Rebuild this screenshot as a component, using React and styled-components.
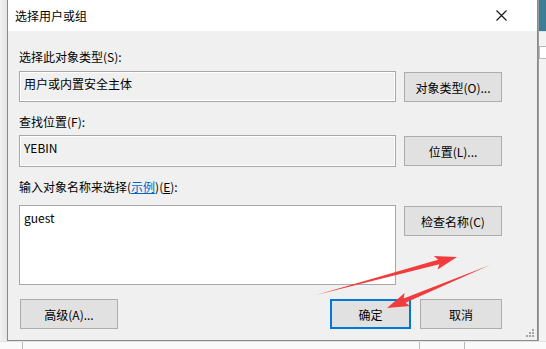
import React from 'react'
import styled, { createGlobalStyle } from 'styled-components'

const GlobalStyle = createGlobalStyle`
  html, body {
    margin: 0;
    padding: 0;
    background: #f4f4f4;
    overflow: hidden;
  }
  body {
    font-family: "Noto Sans CJK SC", "Liberation Sans", sans-serif;
  }
`

const Screen = styled.div`
  position: relative;
  width: 546px;
  height: 349px;
  display: grid;
  grid-template-columns: 7px 531px 8px;
  grid-template-rows: 341px 8px;
  overflow: hidden;
`

const LeftStrip = styled.div`
  background: linear-gradient(90deg, #f2f2f2 0%, #e4e4e4 100%);
`

const RightStrip = styled.div`
  display: flex;
  flex-direction: column;
  background: #f3f3f3;
  border-left: 1px solid #9a9a9a;
`

const RightTop = styled.div`
  height: 31px;
  background: #3d7d96;
  border-bottom: 1px solid #d8e6ec;
`

const RightBox = styled.div`
  margin-top: 14px;
  height: 11px;
  border: 1px solid #b8b8b8;
  border-right: none;
  background: #fff;
`

const BottomStrip = styled.div`
  grid-column: 1 / span 3;
  display: flex;
  background: #fafafa;
  border-top: 1px solid #e2e2e2;
`

const BottomCell = styled.div`
  width: ${p => p.$w}px;
  border-right: 1px solid #b9b9b9;
  flex-shrink: 0;
`

const Dialog = styled.div`
  position: relative;
  display: flex;
  flex-direction: column;
  background: #f0f0f0;
  border-left: 1px solid #8a8a8a;
  border-right: 1px solid #8a8a8a;
  border-bottom: 1px solid #8a8a8a;
  box-sizing: border-box;
`

const TitleBar = styled.div`
  height: 31px;
  background: #fff;
  display: flex;
  align-items: center;
  justify-content: space-between;
  padding-left: 7px;
  flex-shrink: 0;
`

const Title = styled.span`
  font-size: 12px;
  color: #000;
  line-height: 14px;
`

const CloseBtn = styled.div`
  width: 46px;
  height: 31px;
  margin-right: 13px;
  display: flex;
  align-items: center;
  justify-content: center;
`

const Body = styled.div`
  padding: 19px 35px 0 11px;
  display: flex;
  flex-direction: column;
`

const Label = styled.div`
  font-size: 12px;
  line-height: 14px;
  color: #000;
  margin-top: ${p => p.$top || 0}px;
  margin-bottom: ${p => p.$bottom || 0}px;
`

const Link = styled.span`
  color: #0066cc;
  text-decoration: underline;
`

const Key = styled.span`
  text-decoration: underline;
`

const Row = styled.div`
  display: grid;
  grid-template-columns: 377px 98px;
  column-gap: 8px;
  align-items: start;
`

const Field = styled.div`
  height: ${p => p.$h}px;
  box-sizing: border-box;
  border: 1px solid #a8a8a8;
  box-shadow: inset 0 0 0 1px #ffffff;
  background: ${p => (p.$white ? '#ffffff' : '#f0f0f0')};
  padding: 5px 3px 0 4px;
  font-size: 12px;
  line-height: 14px;
  color: #000;
`

const Button = styled.div`
  height: 30px;
  margin-top: ${p => p.$top || 0}px;
  width: ${p => (p.$w ? `${p.$w}px` : 'auto')};
  box-sizing: border-box;
  border: ${p => (p.$primary ? '2px solid #0078d7' : '1px solid #adadad')};
  background: #e1e1e1;
  display: flex;
  align-items: center;
  justify-content: center;
  font-size: 12px;
  color: #000;
`

const Footer = styled.div`
  margin-top: 14px;
  display: flex;
  justify-content: space-between;
  padding-left: 1px;
`

const FooterGroup = styled.div`
  display: flex;
  gap: 9px;
`

const Grip = styled.svg`
  position: absolute;
  right: 2px;
  bottom: 2px;
`

const Arrows = styled.svg`
  position: absolute;
  left: 0;
  top: 0;
  pointer-events: none;
`

function arrowPath(tail, tip, headLen, headHalf, shaftHalf) {
  const dx = tip[0] - tail[0]
  const dy = tip[1] - tail[1]
  const len = Math.hypot(dx, dy)
  const ux = dx / len
  const uy = dy / len
  const nx = -uy
  const ny = ux
  const bx = tip[0] - ux * headLen
  const by = tip[1] - uy * headLen
  const pts = [
    tail,
    [bx + nx * shaftHalf, by + ny * shaftHalf],
    [bx - ux * 3 + nx * headHalf, by - uy * 3 + ny * headHalf],
    tip,
    [bx - ux * 3 - nx * headHalf, by - uy * 3 - ny * headHalf],
    [bx - nx * shaftHalf, by - ny * shaftHalf],
  ]
  return pts.map(p => `${p[0].toFixed(1)},${p[1].toFixed(1)}`).join(' ')
}

export default function App() {
  return (
    <>
      <GlobalStyle />
      <Screen>
        <LeftStrip />
        <Dialog>
          <TitleBar>
            <Title>选择用户或组</Title>
            <CloseBtn>
              <svg width="11" height="11" viewBox="0 0 11 11">
                <path d="M0.5 0.5 L10.5 10.5 M10.5 0.5 L0.5 10.5" stroke="#111" strokeWidth="1.1" />
              </svg>
            </CloseBtn>
          </TitleBar>
          <Body>
            <Label $bottom={7}>选择此对象类型(S):</Label>
            <Row>
              <Field $h={31}>用户或内置安全主体</Field>
              <Button $top={1}>对象类型(O)...</Button>
            </Row>
            <Label $top={13} $bottom={6}>查找位置(F):</Label>
            <Row>
              <Field $h={32}>YEBIN</Field>
              <Button $top={1}>位置(L)...</Button>
            </Row>
            <Label $top={13} $bottom={11}>
              输入对象名称来选择(<Link>示例</Link>)(<Key>E</Key>):
            </Label>
            <Row>
              <Field $h={80} $white>guest</Field>
              <Button $top={1}>检查名称(C)</Button>
            </Row>
            <Footer>
              <Button $w={98}>高级(A)...</Button>
              <FooterGroup>
                <Button $w={81} $primary>确定</Button>
                <Button $w={82}>取消</Button>
              </FooterGroup>
            </Footer>
          </Body>
          <Grip width="9" height="9" viewBox="0 0 9 9">
            <g fill="#a3a3a3">
              <rect x="6" y="0" width="2" height="2" />
              <rect x="3" y="3" width="2" height="2" />
              <rect x="6" y="3" width="2" height="2" />
              <rect x="0" y="6" width="2" height="2" />
              <rect x="3" y="6" width="2" height="2" />
              <rect x="6" y="6" width="2" height="2" />
            </g>
          </Grip>
        </Dialog>
        <RightStrip>
          <RightTop />
          <RightBox />
        </RightStrip>
        <BottomStrip>
          <BottomCell $w={22} />
          <BottomCell $w={396} />
          <BottomCell $w={44} />
        </BottomStrip>
        <Arrows width="546" height="349" viewBox="0 0 546 349">
          <polygon points={arrowPath([316, 295], [457, 257], 19, 7, 2.3)} fill="#f03c3c" />
          <polygon points={arrowPath([490, 265], [387, 308], 19, 7, 2.3)} fill="#f03c3c" />
        </Arrows>
      </Screen>
    </>
  )
}
